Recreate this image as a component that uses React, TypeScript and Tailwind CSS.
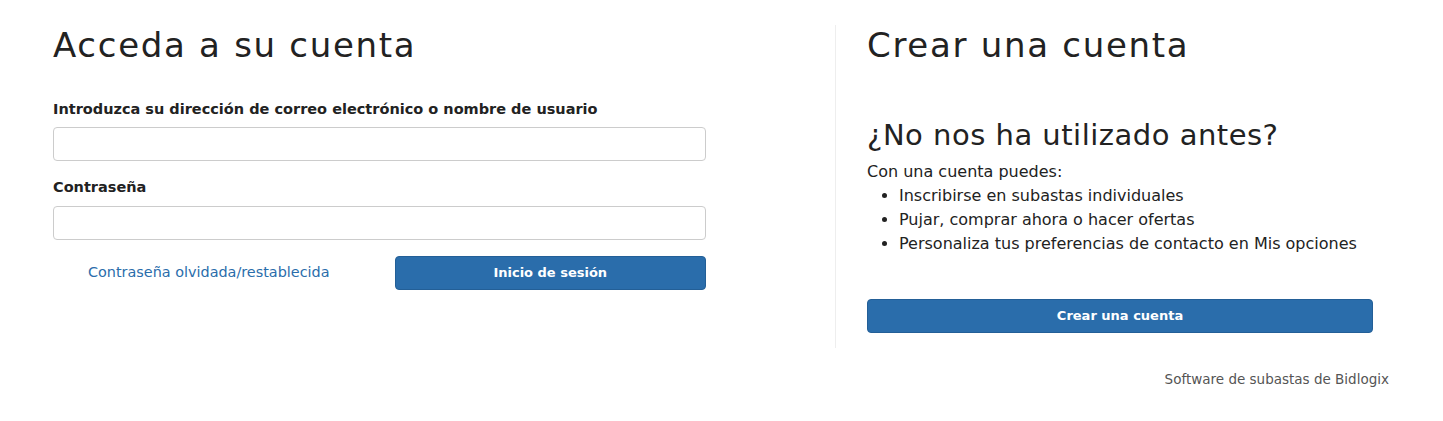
export default function App() {
  return (
    <div className="min-h-screen bg-white text-[#222] font-['DejaVu_Sans',sans-serif]">
      <div className="flex pt-[25px] pl-[53px]">
        {/* login */}
        <div className="w-[653px] shrink-0">
          <h1 className="text-[34px] leading-[40px] font-medium tracking-[1.7px]">Acceda a su cuenta</h1>
          <form className="mt-[33px] flex flex-col">
            <label className="text-[14.5px] font-bold leading-[22px]">
              Introduzca su dirección de correo electrónico o nombre de usuario
            </label>
            <input className="mt-[7px] h-[34px] rounded-[4px] border border-[#ccc] px-3" />
            <label className="mt-[15px] text-[14.5px] font-bold leading-[22px]">Contraseña</label>
            <input type="password" className="mt-[8px] h-[34px] rounded-[4px] border border-[#ccc] px-3" />
            <div className="mt-[16px] grid grid-cols-2 gap-[30px]">
              <a className="flex h-[34px] items-center justify-center text-[14.4px] text-[#2a6dab]">
                Contraseña olvidada/restablecida
              </a>
              <button
                type="button"
                className="h-[34px] rounded-[4px] border border-[#235f97] bg-[#2a6dab] text-[13px] font-bold text-white"
              >
                Inicio de sesión
              </button>
            </div>
          </form>
        </div>

        {/* divider */}
        <div className="ml-[129px] w-px h-[323px] bg-[#eee]" />

        {/* register */}
        <div className="ml-[31px] w-[522px] shrink-0 flex flex-col">
          <h1 className="text-[34px] leading-[40px] font-medium tracking-[1.7px]">Crear una cuenta</h1>
          <h2 className="mt-[52px] text-[29px] leading-[36px] font-medium tracking-[0.5px]">¿No nos ha utilizado antes?</h2>
          <p className="mt-[7px] text-[16px] leading-[24px]">Con una cuenta puedes:</p>
          <ul className="list-disc pl-[32px] text-[16px] leading-[24px]">
            <li>Inscribirse en subastas individuales</li>
            <li>Pujar, comprar ahora o hacer ofertas</li>
            <li>Personaliza tus preferencias de contacto en Mis opciones</li>
          </ul>
          <button
            type="button"
            className="mt-[43px] w-[506px] h-[34px] rounded-[4px] border border-[#235f97] bg-[#2a6dab] text-[13px] font-bold text-white"
          >
            Crear una cuenta
          </button>
          <p className="mt-[36px] text-right text-[13.5px] text-[#555]">Software de subastas de Bidlogix</p>
        </div>
      </div>
    </div>
  );
}
